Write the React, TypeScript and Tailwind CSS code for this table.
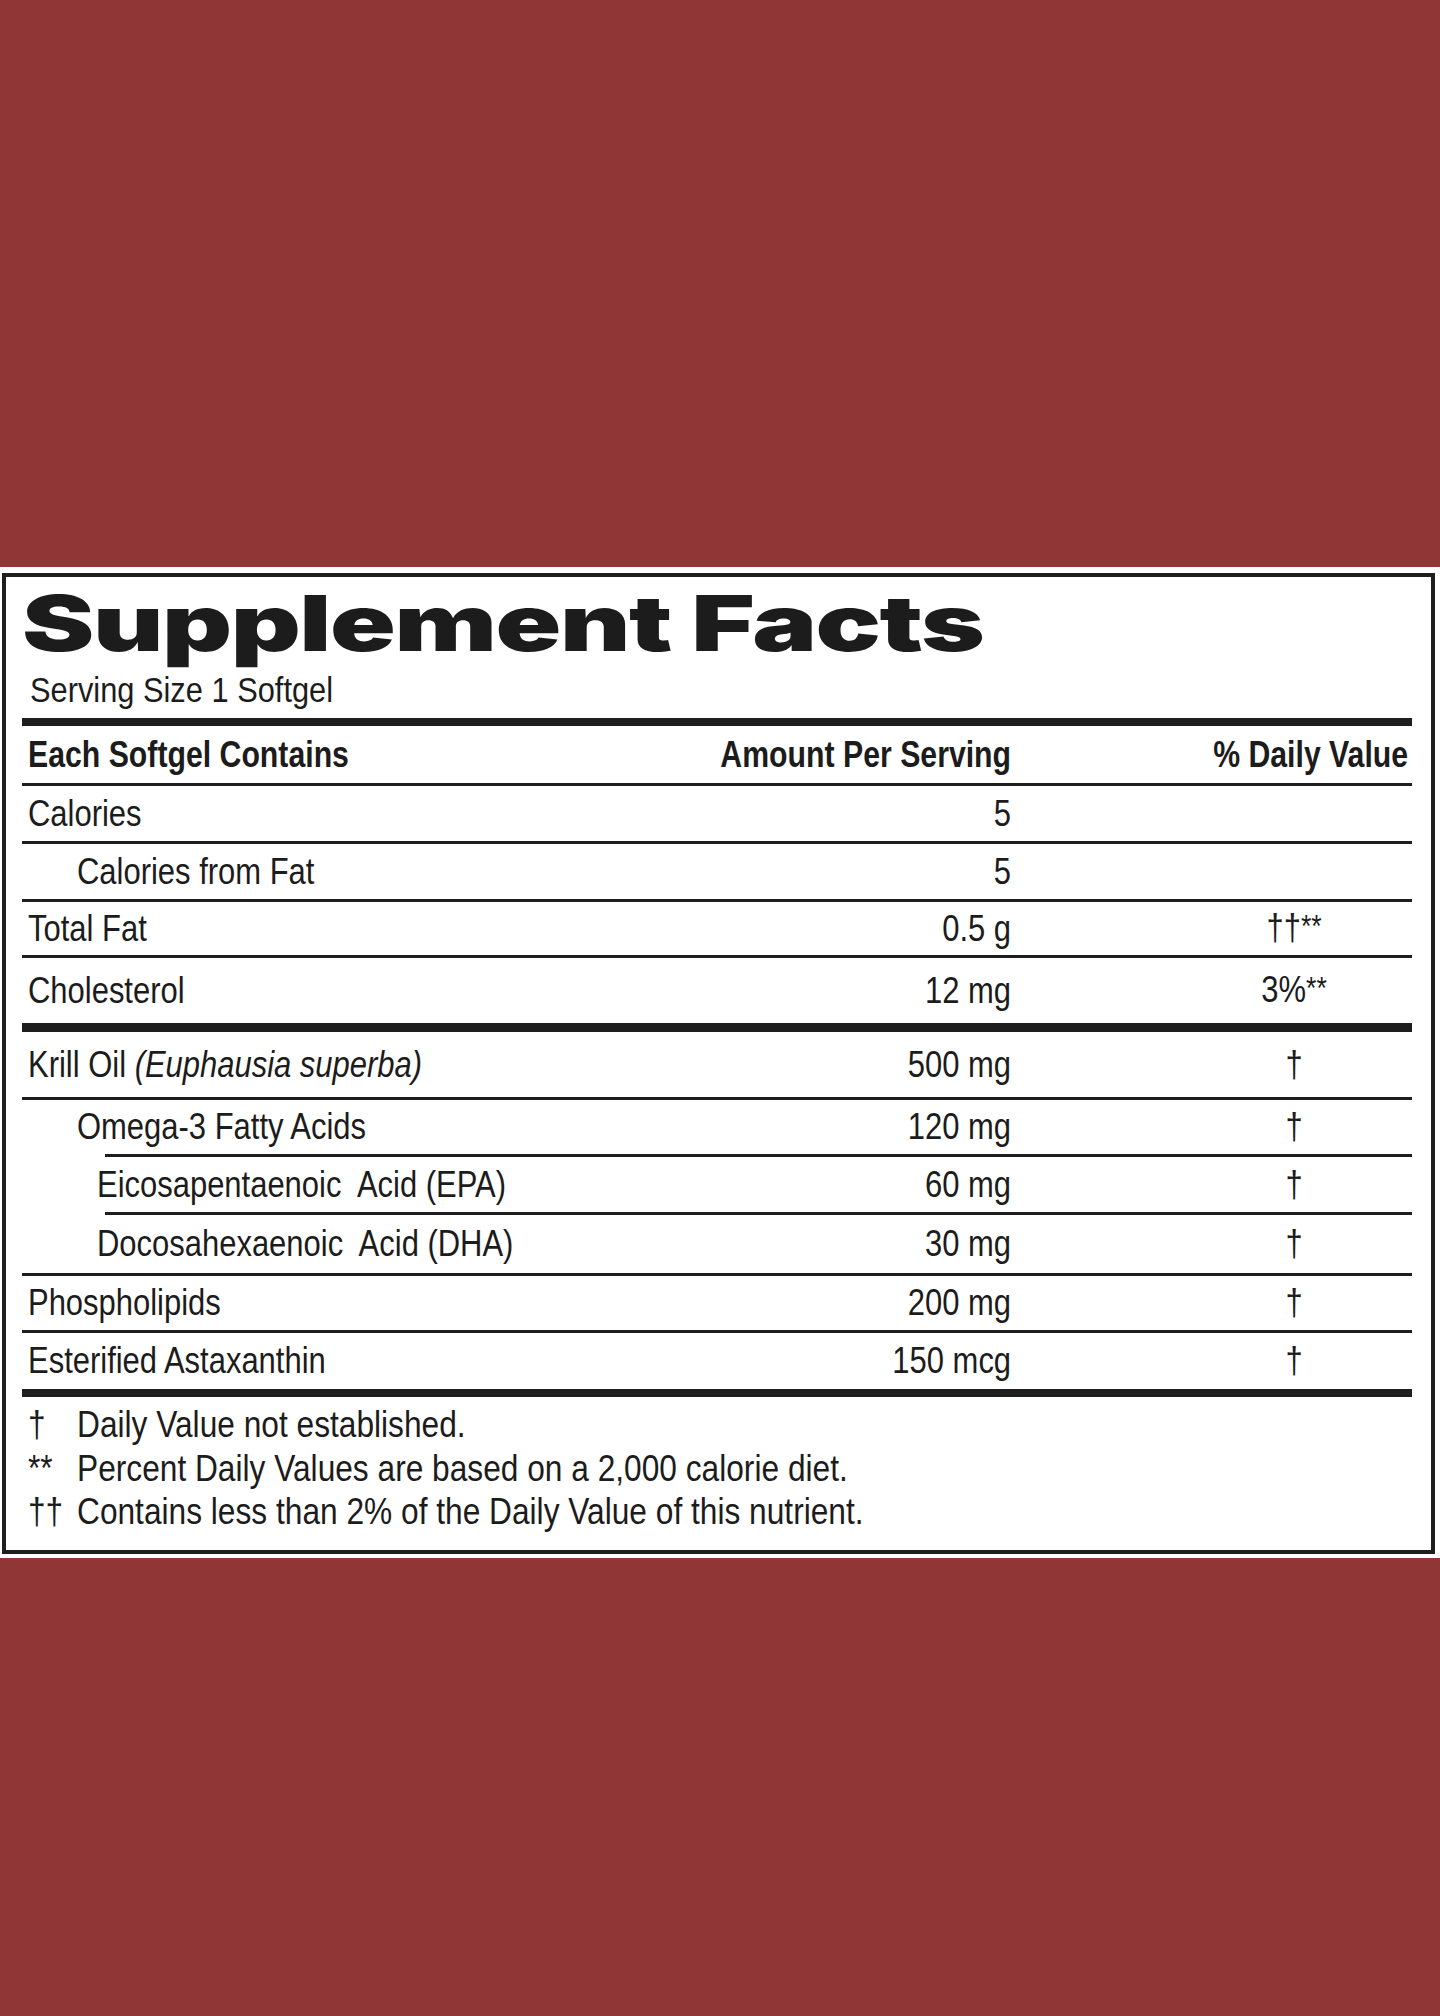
import React from 'react';

// Helvetica Condensed look: Liberation Sans squeezed horizontally
const body = 'font-["Liberation_Sans",Arial,sans-serif]';

type Origin = 'origin-left' | 'origin-right' | 'origin-center';

const Narrow = ({
  children,
  origin = 'origin-left',
  squeeze = 'scale-x-[0.86]',
}: {
  children: React.ReactNode;
  origin?: Origin;
  squeeze?: string;
}) => <span className={`inline-block whitespace-nowrap ${squeeze} ${origin}`}>{children}</span>;

type Row = {
  name: React.ReactNode;
  amount: string;
  dv: React.ReactNode;
  height: string;
  pad: string;
  rule: string;
};

const rows: Row[] = [
  { name: 'Calories', amount: '5', dv: '', height: 'h-[55px]', pad: 'pl-[6px]', rule: 'h-[3px] bg-[#1e1e1e]' },
  { name: 'Calories from Fat', amount: '5', dv: '', height: 'h-[55px]', pad: 'pl-[55px]', rule: 'h-[3px] bg-[#1e1e1e]' },
  { name: 'Total Fat', amount: '0.5 g', dv: <>††<span className="relative -top-[3px] text-[31px]">**</span></>, height: 'h-[53px]', pad: 'pl-[6px]', rule: 'h-[3px] bg-[#1e1e1e]' },
  { name: 'Cholesterol', amount: '12 mg', dv: <>3%<span className="relative -top-[3px] text-[31px]">**</span></>, height: 'h-[65px]', pad: 'pl-[6px]', rule: 'h-[9px] bg-[#1e1e1e]' },
  {
    name: (
      <>
        Krill Oil <i>(Euphausia superba)</i>
      </>
    ),
    amount: '500 mg',
    dv: '†',
    height: 'h-[65px]',
    pad: 'pl-[6px]',
    rule: 'h-[3px] bg-[#1e1e1e]',
  },
  { name: 'Omega-3 Fatty Acids', amount: '120 mg', dv: '†', height: 'h-[54px]', pad: 'pl-[55px]', rule: 'ml-[83px] h-[3px] bg-[#1e1e1e]' },
  { name: 'Eicosapentaenoic\u00a0 Acid (EPA)', amount: '60 mg', dv: '†', height: 'h-[55px]', pad: 'pl-[75px]', rule: 'ml-[83px] h-[3px] bg-[#1e1e1e]' },
  { name: 'Docosahexaenoic\u00a0 Acid (DHA)', amount: '30 mg', dv: '†', height: 'h-[58px]', pad: 'pl-[75px]', rule: 'h-[3px] bg-[#1e1e1e]' },
  { name: 'Phospholipids', amount: '200 mg', dv: '†', height: 'h-[54px]', pad: 'pl-[6px]', rule: 'h-[3px] bg-[#1e1e1e]' },
  { name: 'Esterified Astaxanthin', amount: '150 mcg', dv: '†', height: 'h-[56px]', pad: 'pl-[6px]', rule: 'h-[8px] bg-[#1e1e1e]' },
];

const notes = [
  { mark: '†', text: 'Daily Value not established.' },
  { mark: '**', text: 'Percent Daily Values are based on a 2,000 calorie diet.' },
  { mark: '††', text: 'Contains less than 2% of the Daily Value of this nutrient.' },
];

export default function App() {
  return (
    <div className="min-h-[2016px] overflow-hidden bg-[#913636] pt-[567px]">
      <div className="bg-white pt-[6px] pb-[4px] pl-[2px] pr-[5px]">
        <div className={`border-[4px] border-[#1e1e1e] bg-white pl-[16px] pr-[19px] text-[#1c1c1c] ${body}`}>
          {/* Title */}
          <h1 className='mt-[8px] h-[77px] w-fit origin-left scale-x-[1.41] font-["Inter",sans-serif] text-[77px] leading-[77px] font-black tracking-[-1px] whitespace-nowrap'>
            Supplement Facts
          </h1>
          <div className="mt-[8px] pl-[8px] text-[35px] leading-[40px]">
            <Narrow squeeze="scale-x-[0.88]">Serving Size 1 Softgel</Narrow>
          </div>
          <div className="mt-[8px] h-[8px] bg-[#1e1e1e]" />

          {/* Header */}
          <div className="flex h-[57px] items-center text-[36px] font-bold">
            <div className="flex-1 pl-[6px]">
              <Narrow squeeze="scale-x-[0.84]">Each Softgel Contains</Narrow>
            </div>
            <div className="w-[360px] text-right">
              <Narrow squeeze="scale-x-[0.84]" origin="origin-right">
                Amount Per Serving
              </Narrow>
            </div>
            <div className="w-[401px] pr-[4px] text-right">
              <Narrow squeeze="scale-x-[0.84]" origin="origin-right">
                % Daily Value
              </Narrow>
            </div>
          </div>
          <div className="h-[3px] bg-[#1e1e1e]" />

          {/* Rows */}
          {rows.map((r, i) => (
            <div key={i}>
              <div className={`flex items-center text-[36px] leading-[42px] ${r.height}`}>
                <div className={`flex-1 ${r.pad}`}>
                  <Narrow>{r.name}</Narrow>
                </div>
                <div className="w-[360px] text-right">
                  <Narrow origin="origin-right">{r.amount}</Narrow>
                </div>
                <div className="flex w-[401px] justify-end pr-[58px]">
                  <span className="w-[120px] text-center">
                    <Narrow origin="origin-center">{r.dv}</Narrow>
                  </span>
                </div>
              </div>
              <div className={r.rule} />
            </div>
          ))}

          {/* Footnotes */}
          <div className="pt-[6px] pb-[16px] pl-[6px] text-[36px] leading-[43.5px]">
            {notes.map((n) => (
              <div key={n.mark} className="flex">
                <span className="w-[49px]">
                  <Narrow squeeze="scale-x-[0.88]">{n.mark}</Narrow>
                </span>
                <span>
                  <Narrow squeeze="scale-x-[0.88]">{n.text}</Narrow>
                </span>
              </div>
            ))}
          </div>
        </div>
      </div>
    </div>
  );
}
